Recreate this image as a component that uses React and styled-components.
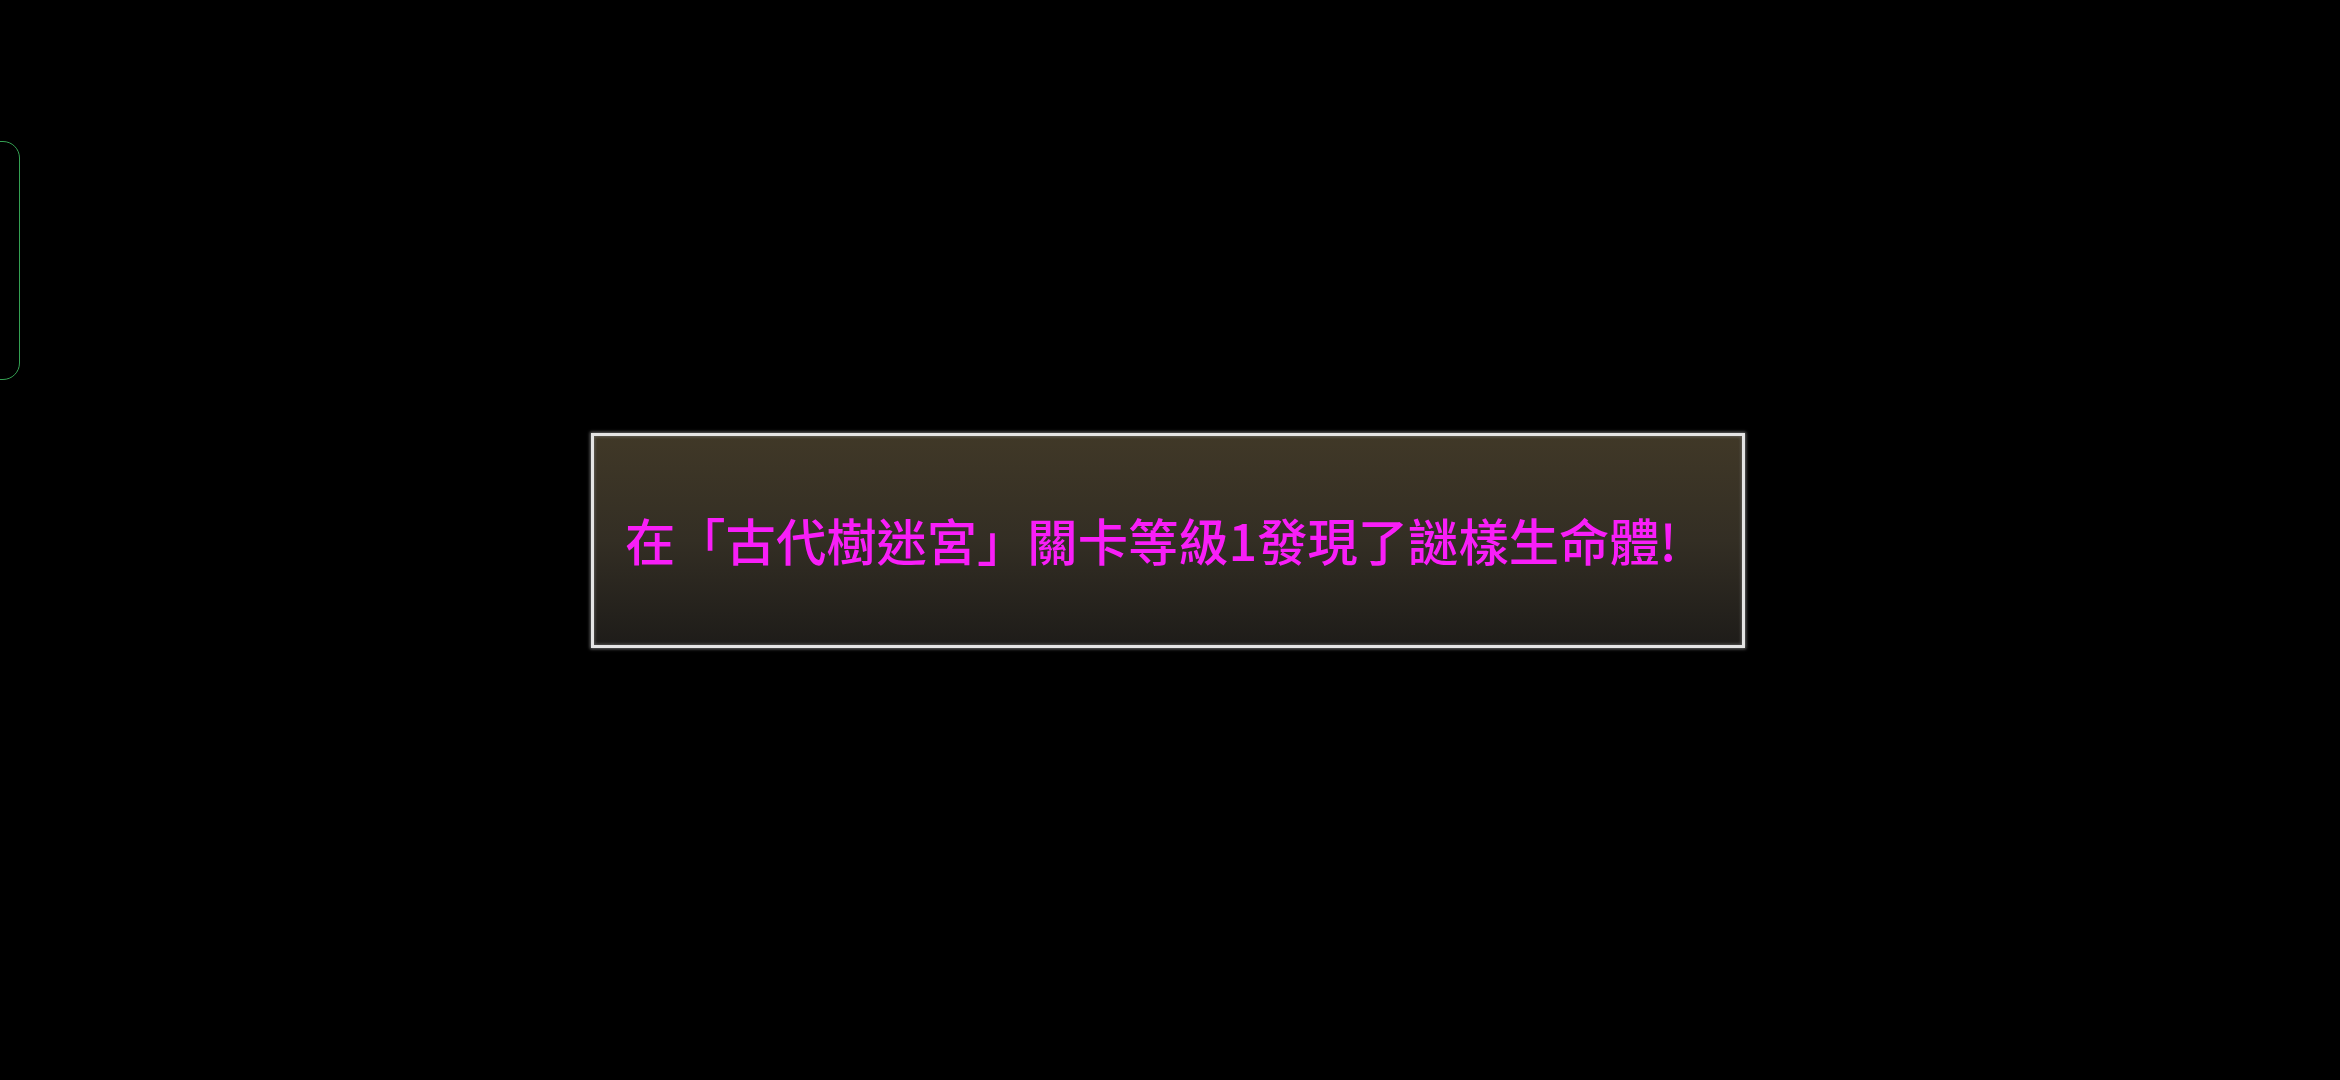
import { createGlobalStyle, styled } from "styled-components";

const GlobalStyle = createGlobalStyle`
    html, body {
        margin: 0;
        padding: 0;
        background: #000;
    }
`

const Screen = styled.div`
    position: relative;
    width: 2340px;
    height: 1080px;
    background: #000;
    display: flex;
    align-items: center;
    justify-content: center;
    overflow: hidden;
`

const SideHandle = styled.div`
    position: absolute;
    left: -20px;
    top: 141px;
    width: 40px;
    height: 239px;
    border: 1.5px solid #34a052;
    border-radius: 17px;
    box-sizing: border-box;
`

const MessageBox = styled.div`
    width: 1154px;
    height: 215px;
    margin-left: -4px;
    box-sizing: border-box;
    border: 3px solid #e4e4e4;
    box-shadow: 0 0 3px 1px rgba(150, 150, 150, 0.7), inset 0 0 3px 1px rgba(120, 120, 120, 0.6);
    background: linear-gradient(to bottom, #403827 0%, #332e24 50%, #1e1c19 100%);
    display: flex;
    align-items: center;
    padding: 0 0 2px 31px;
`

const Message = styled.p`
    margin: 0;
    color: #f81ef8;
    font-family: "Noto Sans CJK TC", "Noto Sans", sans-serif;
    font-weight: 500;
    font-size: 50.3px;
    line-height: 1;
    white-space: nowrap;
`

export default function App() {
    return (
        <>
            <GlobalStyle />
            <Screen>
                <SideHandle />
                <MessageBox>
                    <Message>在「古代樹迷宮」關卡等級1發現了謎樣生命體!</Message>
                </MessageBox>
            </Screen>
        </>
    )
}
